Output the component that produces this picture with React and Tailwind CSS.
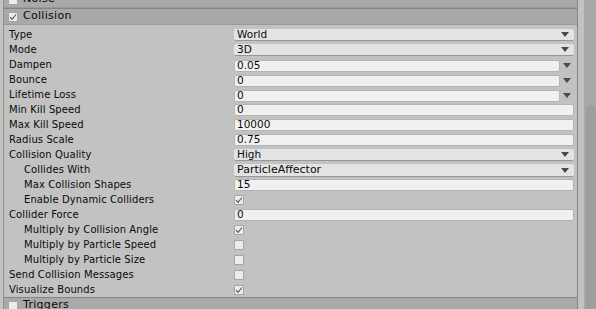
const rows = [
  { label: 'Type', kind: 'popup', value: 'World' },
  { label: 'Mode', kind: 'popup', value: '3D' },
  { label: 'Dampen', kind: 'curve', value: '0.05' },
  { label: 'Bounce', kind: 'curve', value: '0' },
  { label: 'Lifetime Loss', kind: 'curve', value: '0' },
  { label: 'Min Kill Speed', kind: 'text', value: '0' },
  { label: 'Max Kill Speed', kind: 'text', value: '10000' },
  { label: 'Radius Scale', kind: 'text', value: '0.75' },
  { label: 'Collision Quality', kind: 'popup', value: 'High' },
  { label: 'Collides With', kind: 'mask', value: 'ParticleAffector', indent: true },
  { label: 'Max Collision Shapes', kind: 'text', value: '15', indent: true },
  { label: 'Enable Dynamic Colliders', kind: 'check', checked: true, indent: true },
  { label: 'Collider Force', kind: 'text', value: '0' },
  { label: 'Multiply by Collision Angle', kind: 'check', checked: true, indent: true },
  { label: 'Multiply by Particle Speed', kind: 'check', checked: false, indent: true },
  { label: 'Multiply by Particle Size', kind: 'check', checked: false, indent: true },
  { label: 'Send Collision Messages', kind: 'check', checked: false },
  { label: 'Visualize Bounds', kind: 'check', checked: true },
];

const Arrow = () => (
  <svg width="8" height="5" viewBox="0 0 8 5" className="shrink-0">
    <path d="M0 0 H8 L4 5 Z" fill="#4a4a4a" />
  </svg>
);

const Tick = () => (
  <svg width="8" height="8" viewBox="0 0 8 8">
    <path d="M1 4.2 L3 6.3 L7 1.5" fill="none" stroke="#555" strokeWidth="1.1" />
  </svg>
);

const CheckBox = ({ checked }) => (
  <div className="w-[10px] h-[10px] bg-[#ececec] border border-[#a4a4a4] rounded-[1px] flex items-center justify-center">
    {checked && <Tick />}
  </div>
);

const Field = ({ row }) => {
  if (row.kind === 'check') {
    return (
      <div className="h-full flex items-center pt-[1px]">
        <CheckBox checked={row.checked} />
      </div>
    );
  }
  if (row.kind === 'popup' || row.kind === 'mask') {
    return (
      <div className="pt-[2px]">
        <div
          className={
            'w-[340px] bg-[#e3e3e3] border-b border-[#979797] rounded-[2px] flex items-center justify-between pl-[3px] pr-[5px] ' +
            (row.kind === 'mask' ? 'h-[13px] text-[11px]' : 'h-[12px] text-[10.5px]')
          }
        >
          <span>{row.value}</span>
          <Arrow />
        </div>
      </div>
    );
  }
  if (row.kind === 'curve') {
    return (
      <div className="pt-[2px] flex items-center">
        <div className="w-[326px] h-[12px] bg-[#f0f0f0] border border-[#b4b4b4] rounded-[2px] flex items-center pl-[2px] text-[10.5px]">
          {row.value}
        </div>
        <div className="w-[14px] flex justify-center">
          <Arrow />
        </div>
      </div>
    );
  }
  return (
    <div className="pt-[2px]">
      <div className="w-[340px] h-[12px] bg-[#f0f0f0] border border-[#b4b4b4] rounded-[2px] flex items-center pl-[2px] text-[10.5px]">
        {row.value}
      </div>
    </div>
  );
};

const SectionHeader = ({ title, checked, className = '' }) => (
  <div className={'h-[17px] shrink-0 border-t border-[#858585] border-b border-b-[#9a9a9a] bg-[#a9a9a9] flex items-center ' + className}>
    <div className="ml-[4px]">
      <CheckBox checked={checked} />
    </div>
    <span className="ml-[5px] text-[11px] tracking-[0.3px] text-[#0a0a0a]">{title}</span>
  </div>
);

export default function App() {
  return (
    <div
      className="w-[596px] h-[309px] overflow-hidden bg-[#c2c2c2] flex text-[#0a0a0a] text-[10px]"
      style={{ fontFamily: '"DejaVu Sans", Verdana, sans-serif' }}
    >
      <div className="w-[4px] shrink-0 bg-[#c4c4c4] border-r border-[#8e8e8e]" />
      <div className="w-[574px] shrink-0 flex flex-col border-r border-[#858585]">
        <SectionHeader title="Noise" checked={false} className="-mt-[9px]" />
        <SectionHeader title="Collision" checked={true} />
        <div className="pt-[2px] flex flex-col">
          {rows.map((row) => (
            <div key={row.label} className="h-[15px] flex">
              <div
                className={
                  'w-[230px] shrink-0 leading-[16px] whitespace-nowrap tracking-[0.1px] ' +
                  (row.indent ? 'pl-[20px]' : 'pl-[5px]')
                }
              >
                {row.label}
              </div>
              <Field row={row} />
            </div>
          ))}
        </div>
        <SectionHeader title="Triggers" checked={false} />
      </div>
      <div className="w-[6px] shrink-0 bg-[#c2c2c2]" />
      <div className="flex-1 bg-[#a9a9a9] flex flex-col pl-[2px]">
        <div className="h-[105px] shrink-0" />
        <div className="flex-1 bg-[#9e9e9e] rounded-t-[5px]" />
      </div>
    </div>
  );
}
